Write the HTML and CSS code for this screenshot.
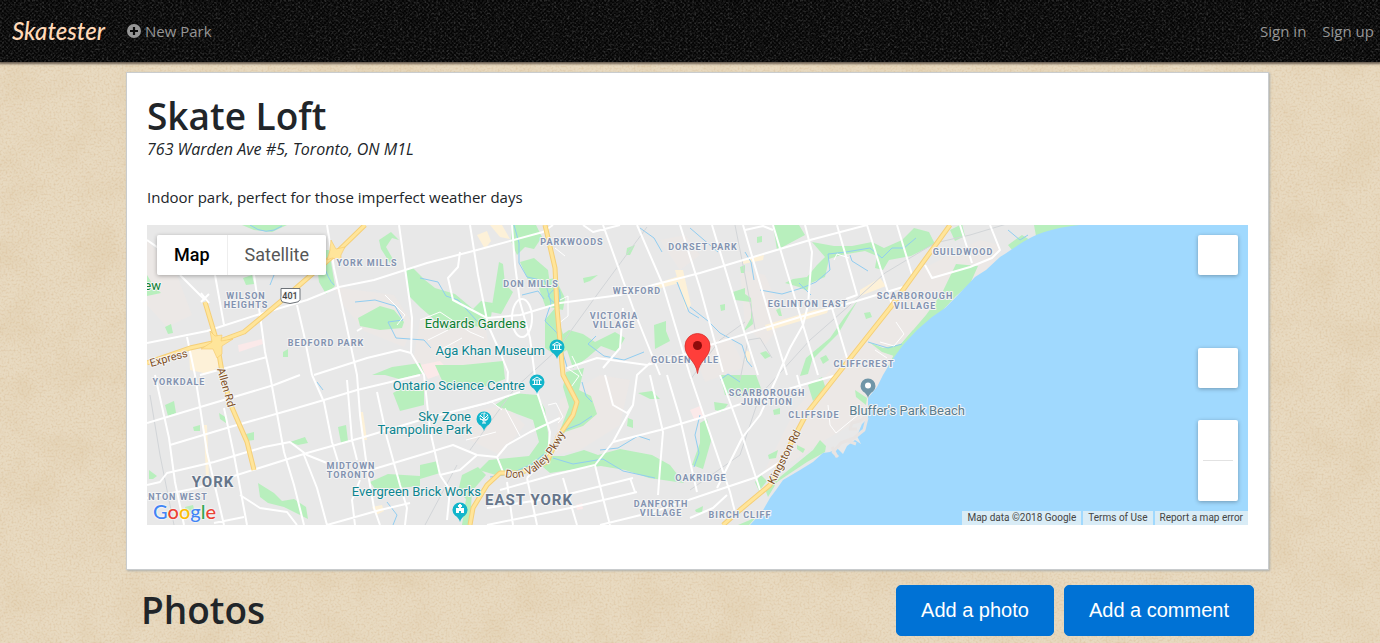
FILE: index.html
```html
<!DOCTYPE html>
<html lang="en">
<head>
<meta charset="utf-8">
<title>Skatester - Skate Loft</title>
<link rel="stylesheet" href="styles.css">
</head>
<body>
<header class="navbar">
  <a class="brand" href="#">Skatester</a>
  <nav class="nav-main">
    <a class="nav-link" href="#"><svg class="nav-icon" viewBox="0 0 14 14" aria-hidden="true"><circle cx="7" cy="7" r="7" fill="#969696"/><path d="M7 3v8M3 7h8" stroke="#0b0b0b" stroke-width="2.2"/></svg>New Park</a>
  </nav>
  <nav class="nav-user">
    <a class="nav-link" href="#">Sign in</a>
    <a class="nav-link" href="#">Sign up</a>
  </nav>
</header>

<main class="page">
  <section class="card">
    <h1 class="title">Skate Loft</h1>
    <address class="address">763 Warden Ave #5, Toronto, ON M1L</address>
    <p class="description">Indoor park, perfect for those imperfect weather days</p>

    <div class="map">
      <svg class="map-canvas" viewBox="147 225 1101 300" preserveAspectRatio="xMidYMid slice" role="img" aria-label="Map of Toronto">
        <rect x="147" y="225" width="1101" height="300" fill="#e8e8e8"/>

        <!-- built-up areas -->
        <g fill="#ece8e6">
          <path d="M147 240l30 35 15 40-25 12-20-22zM334 287l60 8 20 30-10 22-40-16-20-25zM420 320l35-15 30 18 8 50-50 8-30-20zM560 400l40-25 30 5-10 45-40 25-25 5zM455 415l50-10 20 20-25 30-40-20z"/>
          <path d="M740 270l25 5 20 45-20 25-20-20zM880 320l40-50 60-30 20 5-10 30-50 45-40 40-40 60-35 20-30 20-30 10 30-60 40-45zM690 345l40-8 15 30-40 15zM660 240l25-5 15 20-20 15z"/>
        </g>
        <g fill="#fdf1d8">
          <path d="M189 350l29-2 2 18-12 8-18-4zM477 235l10-4 4 10-6 8zM490 225h12l8 14-10-2zM675 270l8 0 8 35-5 5zM655 284l24-8v7l-22 6zM765 325l50-15 14-2-2 5-60 18zM745 350l5 2v10l-5-2zM860 290l20-12 6 8-26 10z"/>
          <path d="M204 425l3 0 2 55-3 0zM360 412l3 0 4 28-3 0zM372 507l10-2 2 6-8 4zM740 260l24-5-1 5-20 4z"/>
        </g>
        <g fill="#fbe9e9"><path d="M238 345l24-6 1 5-24 8zM420 365l20-4 10 10-22 8zM690 410l10-4 5 10-10 5zM576 505l6-2 1 6-6 1z"/></g>

        <!-- parks -->
        <g fill="#b8efbd">
          <path d="M242 225h45l-15 7-18-2zM147 275l6 10 8 8-14 3zM243 278l9-3 2 9-8 1zM322 250l7 0 6 36-9 8-7-12-2-16zM358 318l22-12 14 4 10 12-2 6-22 2-20-4zM379 240l12-8 8 8-7-2-6 9 8 14-4 2-9-14zM165 327l6-3 2 9-5 1zM283 352l5-3v8l-5 0zM405 270l8-2 12 12 10 8 20 6 18 15 8-8 12 2-2 14-12 10-14-3-18 6-12-10-14-12-12-12z"/>
          <path d="M512 225h24l6 12-8 12-9-2-8 8-6-14zM499 262l4 2 2 20 8 8-12 22-10-2zM520 262l14-4 14 12 4 30-6 8-8-22-10-6zM545 280l10-2 10 20-2 12-18-4zM545 320l10-12 8 26 6-4 14 4 12 8 20-10 10 6-8 14-16-6-14 12-14 10-6-18-10 6-12-8zM627 248l8-3-5 10-4 0zM583 278l15-3-8 6-6 2zM654 325l12-4 0 10 4 10-15 8zM372 375l20-8 28-4 4 10-25 6-14-4z"/>
          <path d="M435 365l28 0 40-4 2 18-32 12-28-4zM566 372l18-4-5 22 12 6 6 18-14 12-18 6-15 24 14 0 20-6 14 5 22-6 32 6 18 10 14 18-35-5-24-8-24-4-25 3-26 4-7-6 2-14 14-20 10-26-6-20zM495 405l18-12 24 2 8 14 4 32 0 16-25 14-25 5-20-6 10-10 20-2 20-2 10-14-6-22-16-6z"/>
          <path d="M393 393l14-8 17-2 0 22-24 6zM338 427l8-2 2 16-7 2zM370 482l18-8 32 2v10l-44 4zM258 483l16 10 8 8 12-2 12 8 2 12-8-4-16-8-16-4-8-6zM165 405l9-4 2 12-8 3zM246 434l8-2v8l-7 1zM219 413l8 5-1 5-6-4zM193 427l7-2v6l-6 0zM290 442l15-5 3 6-10 2zM149 470l8 6-4 3-4 0zM185 507l8-2 2 8-8 3zM420 465l18-4 2 12-20 6zM462 475l16-8 8 8-14 16-2 34h-8l4-26-8-8z"/>
          <path d="M773 225h26l6 10-28 15zM812 242l22 4 18 0 20-4 12 6 18-8 12-12 15 4 6 12-24 12-22 4-6 10-8-2 2-12-12-5-24 4-12 4-4 18-14 6-4 8-8-4-14-4 8-4 14-2 10-12 8-8zM733 292l12-4 0 6 6 4 2 26-10 8 8-14 0-16-16-2zM740 267l5-2v8l-4 0zM757 237l5-1 0 6-5 1zM720 305l5-1v6l-4 1zM776 310l4-2 2 8-3 0zM858 300l-14 18-14 20-24 20-6 18 8-2 4-14 26-26zM864 313l6-1 2 5-6 2zM820 358l6-3 3 5-6 4zM760 353l6-2 5 5-6 3zM869 342l14 6 18-4 12-14 5 2-10 18-14 6-12-4z"/>
          <path d="M956 264l22 2-8 18-14 12-28 30-32 40-18 22 18-38 30-35 16-22zM1008 245l14-10 8 5-18 10zM1034 225h48l-46 11zM950 230l12-6 3 12-10 5zM720 375h36l6 16-22 6-15-2zM808 385l14-8 4 12-13 12zM714 402l14 2-6 8-7-2zM692 465l8-22 0-20 7-4 4 22-8 28zM768 455l10-5-2 8-7 1zM797 445l8 4-2 4-6-4zM773 410l7-2v6l-6 1zM813 450l7-10 6 6-1 6-18 10-30 20-9 15-3-8 10-8zM855 390l12 8-1 7-10-8zM628 418l5 2v8l-6-2zM638 393l14-2 8 8-10 0zM695 510l8-4-1 7-6-1zM755 482l6-7 6 6-8 10zM749 525l9-10-8 5-12 5z"/>
        </g>

        <!-- lake -->
        <path fill="#a0d9fe" d="M1248 225H1080C1062 227 1046 230 1032 237 1020 243 1010 251 1000 257L986 270 975 277 957 296 945 308 932 317 917 330 903 345 892 360 883 375 877 387 868 398 868 418 862 424 857 436 861 444 855 440 847 446 843 454 837 448 830 452 823 453 813 462 800 470 783 480 776 490 770 498 762 512 750 525H1248z"/>
        <path fill="none" stroke="#e8e4e2" stroke-width="3" stroke-linejoin="round" d="M867 416l-7 5-8 2-2 6 7 0M867 418l-3 12-10 8-13 5-8 9 5 5M832 447l5 10M848 441l8 3"/>

        <!-- streams -->
        <g fill="none" stroke="#91cdf1" stroke-width="1">
          <path d="M250 225q16 12 32 1M270 285l4-10M322 260q6 20 12 25M355 302l20-2 20 6 8 14-15 2 8 16 28 2 7 8M420 278l18 4 8 14 12 4 18 20 10 10M514 225l5 18 0 20 8 14 18 4 6 22-6 18 12 12 10 34M522 295l16-4 6 8M548 296q12-16 12 0t-12 0M640 228l14 10 8 14M677 282l12 30 10 6M644 352l-20 8-20-4-16-12 8-8"/>
          <path d="M690 228l28 24M745 252l6 10 3 18M760 290l22 4 20-6 14-6 14-12-2-16 18-2 24-4 12 10 10-10 12 0 12-10M850 255l2 6 16 10M690 307l18 14 12 12 22 12 5 16 5 6M868 342l20 6 14-4M799 283l12 12M1008 230l12 10 8-5M560 432l20-8 12-8M600 450l18-2 20-12 12 4M553 458l20 6 30-5 20 12 32 7M582 382l4 14 6 6M490 477l20-3 22-10 12-10M387 502l10 13-4 10M720 380l8-6 12 8M700 415l-5 20 4 18-5 14M317 382l6 8"/>
        </g>

        <!-- railways -->
        <g fill="none" stroke="#d2d5d8">
          <path d="M150 395l10 60 14 70M470 450l45-62 42-38 42-58 48-65M457 465l-32 60M735 225l10 50 10 54M740 380l8-40 12-2 12 20M690 490l50-35 20-60 50-55 40-35 35-32 50-30 35-8 40-12M690 380l30-40 25-18"/>
        </g>

        <!-- minor streets -->
        <g class="streets-minor">
          <path d="M420 320l20-8 30 20 14 6M428 340l20-10M440 350l22-12M880 342l14 4 10-12-8-12M875 350l12 8M828 405l2 20 6 8 12-10 10-8M834 260l3-6 12 4M385 295l20 20-8 10M555 248l10 8M548 405l8-2 7 14-5 6M462 410l30-8 10 8M505 408l15 28M466 440l30-8M560 300l8-4 0 20-10 8M567 368l12 8-10 14M572 356l10 20"/>
        </g>

        <!-- streets -->
        <g class="streets">
          <path d="M327 225L334 268 347 328 357 375 360 415 367 468 374 508 380 525M399 225L405 268 412 318 411 353 424 375 430 430 440 475M147 343L207 331 257 315 307 300 339 287 374 280 427 263 477 250 543 232 553 225M314 375L367 358 400 350 411 353M254 275L260 315 265 352 270 375 284 452 294 485 304 525M297 305L304 335 312 375M200 375L267 357M215 275L224 325M187 337L195 375M180 275L205 300M147 240L190 270"/>
          <path d="M147 423L197 408 274 385 300 375M170 445L230 427 290 410 324 400 357 390 420 375M155 375L169 438 175 482 184 525M195 375L207 452 224 525M224 408L234 455 247 525M147 485L160 482 167 473 214 462 264 447 290 442 307 455 327 463M197 488L237 475 307 453 364 437 427 418 487 403 520 392M304 455L317 488 327 525M312 375L324 402 332 442 340 468M347 380L352 440 357 460M377 392L387 438 400 485 407 508 405 525M327 525L380 510 410 503M364 472L427 453 453 445 477 455 497 457M240 495L260 508 287 512 297 525M147 498L197 488M214 523L244 517M360 480L352 500 355 525M357 331L362 328"/>
          <path d="M470 225L478 275 488 325 500 352 508 372 507 390M512 225L515 265 520 302 530 338 537 392 550 432 548 455 527 478M460 252L458 267 448 278 453 300 487 318 520 315 560 303 620 295 653 285 700 273 750 258 810 240 867 225M603 225L633 308 660 375M637 225L663 285 690 375 730 492 735 512M680 225L700 288 723 372M567 368L597 358 647 365 700 350 710 345 800 317 850 303 903 287M583 225L593 232 620 225M650 363L637 375 633 405 613 442 595 465 553 475 500 490M605 375L613 405 627 413 633 405M497 457L507 445 530 432 560 418M497 457L503 472M595 465L603 498 610 525M613 442L660 430 700 418 767 395 837 375M650 375L663 432 660 468 658 495M667 375L680 418 697 492M487 508L553 498 633 478M563 478L577 525M507 482L513 525M527 478L537 525M487 525L570 508 637 492M600 525L653 512 727 487 757 477 780 462M623 308L620 348 603 368M440 475L460 470 477 455M440 475L450 490 447 520M630 478L635 492"/>
          <ellipse cx="522" cy="318" rx="10" ry="19"/>
          <path d="M712 225L743 328 758 375M743 225L770 318 787 375M773 225L800 315 818 375M805 225L812 252 808 305 803 325 790 348 778 375 760 415 742 438 717 488M837 225L857 295 846 299M867 225L892 305M897 225L913 278M960 225L972 263M925 265L932 278 970 267 992 258 1000 250 990 225M832 308L847 358M720 375L742 435 760 490M797 375L801 390M690 518L713 508 727 495M745 230L763 226 773 230"/>
        </g>

        <!-- highways -->
        <g class="highway-edge">
          <path d="M147 363L190 348 217 342 244 332 280 302 334 255 365 225M205 302L217 342 222 372 230 403 247 442 254 470M545 225L555 268 557 308 560 342 563 375 577 402 573 415 558 437 547 462 520 473 500 473 487 485 473 508 470 525M950 225L890 308 837 375 807 413 790 445 770 485 740 510 723 525"/>
        </g>
        <g class="highway">
          <path d="M147 363L190 348 217 342 244 332 280 302 334 255 365 225M205 302L217 342 222 372 230 403 247 442 254 470M545 225L555 268 557 308 560 342 563 375 577 402 573 415 558 437 547 462 520 473 500 473 487 485 473 508 470 525M950 225L890 308 837 375 807 413 790 445 770 485 740 510 723 525"/>
        </g>
        <path fill="#ffe59a" stroke="#f5c868" stroke-width=".6" d="M210 331l5 5 7-1-1 6 12-2-11 7 0 8-5 4-4-9-12 0 11-7zM331 240l5 9 9-2-4 8 0 5-9-2-5 2 3-10z"/>
        <path fill="none" stroke="#fff" stroke-width="2" d="M201 293l8 10M201 302l8-8"/>

        <path fill="#fff" stroke="#6d7278" d="M281 288.500h19v11q-1 3-5 3l-5 1-5-1q-4 0-4-3z"/>
        <text class="shield" x="290" y="299">401</text>

        <!-- road names -->
        <g class="road-name">
          <text transform="translate(151 367) rotate(-16)">Express</text>
          <text transform="translate(217 369) rotate(74)">Allen Rd</text>
          <text transform="translate(774 485) rotate(-63)">Kingston Rd</text>
          <path id="valley" fill="none" stroke="none" d="M505 477Q540 484 565 434"/>
          <text><textPath href="#valley">Don Valley Pkwy</textPath></text>
        </g>

        <!-- districts -->
        <g class="area">
          <text x="367" y="266">YORK MILLS</text>
          <text x="246" y="299">WILSON</text><text x="246" y="308">HEIGHTS</text>
          <text x="326" y="346">BEDFORD PARK</text><text x="179" y="385">YORKDALE</text>
          <text x="572" y="245">PARKWOODS</text><text x="703" y="250">DORSET PARK</text>
          <text x="531" y="287">DON MILLS</text><text x="637" y="294">WEXFORD</text>
          <text x="614" y="319">VICTORIA</text><text x="614" y="328">VILLAGE</text>
          <text x="685" y="363">GOLDEN MILE</text><text x="808" y="307">EGLINTON EAST</text>
          <text x="963" y="255">GUILDWOOD</text>
          <text x="915" y="299">SCARBOROUGH</text><text x="915" y="309">VILLAGE</text>
          <text x="864" y="367">CLIFFCREST</text>
          <text x="767" y="396">SCARBOROUGH</text><text x="767" y="405">JUNCTION</text>
          <text x="814" y="418">CLIFFSIDE</text>
          <text x="351" y="469">MIDTOWN</text><text x="351" y="478">TORONTO</text>
          <text x="701" y="481">OAKRIDGE</text>
          <text x="661" y="507">DANFORTH</text><text x="661" y="516">VILLAGE</text>
          <text x="740" y="518">BIRCH CLIFF</text><text x="178" y="500">NTON WEST</text>
        </g>
        <g class="city"><text x="213" y="487">YORK</text><text x="529" y="505">EAST YORK</text></g>

        <!-- places -->
        <g class="place place-park"><text x="161" y="290">ew</text><text x="526" y="328">Edwards Gardens</text></g>
        <g class="place place-sight">
          <text x="545" y="355">Aga Khan Museum</text><text x="525" y="390">Ontario Science Centre</text>
          <text x="471" y="421">Sky Zone</text><text x="472" y="434">Trampoline Park</text>
          <text x="481" y="496">Evergreen Brick Works</text>
        </g>
        <g class="place place-beach"><text x="965" y="415">Bluffer's Park Beach</text></g>

        <defs><path id="pin" d="M0 11Q-1 7-5 4.500A7.500 7.500 0 1 1 5 4.500Q1 7 0 11z"/></defs>
        <g fill="#12b5cb">
          <use href="#pin" x="557" y="348"/><use href="#pin" x="537" y="383"/><use href="#pin" x="484" y="420"/><use href="#pin" x="460" y="511"/>
        </g>
        <g fill="none" stroke="#fff">
          <path d="M552.500 345h9l-4.500-3zM554.500 345v4M557 345v4M559.500 345v4M552.500 349.500h9M532.500 380h9l-4.500-3zM534.500 380v4M537 380v4M539.500 380v4M532.500 384.500h9"/>
          <path fill="#fff" stroke="none" d="M456 508h3v-1h-1v-2h1v-1h2v1h1v2h-1v1h3v5h-3v-2h-2v2h-3z"/>
          <path d="M484 413v10M480 415l4 4 4-4M480 419l4 1 4-1M482 423h4"/><circle cx="484" cy="417" r="4" stroke-dasharray="2 1"/>
        </g>
        <use href="#pin" x="868" y="387" fill="#7096a8"/><circle cx="868" cy="385.500" r="3" fill="#fff"/>

        <path fill="#ff3e3a" stroke="#d8302b" stroke-width=".8" d="M697.500 373.500C696 360 685 358 685 346a12.500 12.500 0 1 1 25 0C710 358 699 360 697.500 373.500z"/>
        <circle cx="697.500" cy="345.500" r="4.500" fill="#8e0b0b"/>
      </svg>

      <div class="map-type">
        <button class="type-button type-active" type="button">Map</button>
        <button class="type-button" type="button">Satellite</button>
      </div>
      <div class="map-tools">
        <button class="tool" type="button" aria-label="Toggle fullscreen view"></button>
        <div class="tool-stack">
          <button class="tool" type="button" aria-label="Street View"></button>
          <div class="zoom">
            <button class="zoom-button" type="button" aria-label="Zoom in"></button>
            <button class="zoom-button" type="button" aria-label="Zoom out"></button>
          </div>
        </div>
      </div>
      <a class="map-logo" href="#"><span class="blue">G</span><span class="red">o</span><span class="yellow">o</span><span class="blue">g</span><span class="green">l</span><span class="red">e</span></a>
      <div class="map-legal">
        <span class="legal-item">Map data ©2018 Google</span>
        <a class="legal-item" href="#">Terms of Use</a>
        <a class="legal-item" href="#">Report a map error</a>
      </div>
    </div>
  </section>

  <section class="photos">
    <h2 class="title">Photos</h2>
    <div class="actions">
      <button class="button" type="button">Add a photo</button>
      <button class="button" type="button">Add a comment</button>
    </div>
  </section>
</main>
</body>
</html>
```
FILE: styles.css
```css
* {
  box-sizing: border-box;
}

body {
  margin: 0;
  color: #212529;
  font: 15px/24px "Open Sans", "Noto Sans", sans-serif;
  background-color: #e8dac1;
  background-image: url("data:image/svg+xml,%3Csvg xmlns='http://www.w3.org/2000/svg' width='512' height='512'%3E%3Cfilter id='g' x='0' y='0' width='1' height='1'%3E%3CfeTurbulence type='fractalNoise' baseFrequency='.5' numOctaves='3' seed='4' stitchTiles='stitch'/%3E%3CfeColorMatrix values='0 0 0 0 .65 0 0 0 0 .45 0 0 0 0 .25 0 1 0 0 -.43'/%3E%3C/filter%3E%3Cfilter id='c' x='0' y='0' width='1' height='1'%3E%3CfeTurbulence type='fractalNoise' baseFrequency='.025' numOctaves='5' seed='9' stitchTiles='stitch'/%3E%3CfeColorMatrix values='0 0 0 0 .74 0 0 0 0 .6 0 0 0 0 .4 0 1 0 0 -.43'/%3E%3C/filter%3E%3Crect width='512' height='512' filter='url(%23c)'/%3E%3Crect width='512' height='512' filter='url(%23g)'/%3E%3C/svg%3E");
}

a {
  color: inherit;
  text-decoration: none;
}

button {
  border: 0;
  cursor: pointer;
}

.navbar {
  display: flex;
  align-items: center;
  height: 62px;
  padding: 0 6px 0 12px;
  color: #969696;
  background-color: #0d0d0d;
  background-image:
    url("data:image/svg+xml,%3Csvg xmlns='http://www.w3.org/2000/svg' width='256' height='128'%3E%3Cfilter id='n' x='0' y='0' width='1' height='1'%3E%3CfeTurbulence type='fractalNoise' baseFrequency='.45' numOctaves='2' stitchTiles='stitch'/%3E%3CfeColorMatrix values='0 0 0 0 .2 0 0 0 0 .2 0 0 0 0 .2 0 1 0 0 -.5'/%3E%3C/filter%3E%3Crect width='256' height='128' filter='url(%23n)'/%3E%3C/svg%3E"),
    repeating-conic-gradient(#050505 0 25%, #121212 0 50%);
  background-size: auto, 4px 4px;
  box-shadow: 0 1px 2px 1px #6b5f52;
}

.brand {
  width: 115px;
  color: #ffd9b8;
  font: italic 500 24px/32px Lato, sans-serif;
}

.nav-main {
  flex: 1;
}

.nav-user {
  display: flex;
  gap: 16px;
}

.nav-link {
  display: flex;
  align-items: center;
  gap: 4px;
}

.nav-icon {
  width: 14px;
  height: 14px;
}

.page {
  padding: 10px 111px 7px 126px;
}

.card {
  padding: 24px 20px 44px;
  background: #fff;
  border: 1px solid #c9ccce;
  box-shadow: 1px 1px 2px #aeb0ae;
}

.title {
  margin: 0 0 2px;
  color: #212529;
  font-size: 37px;
  font-weight: 600;
  line-height: 38px;
}

.address {
  font-size: 16px;
  font-style: italic;
}

.description {
  margin: 24px 0 16px;
}

.map {
  position: relative;
  height: 300px;
  overflow: hidden;
  font-family: Roboto, sans-serif;
}

.map-canvas {
  display: block;
  width: 100%;
  height: 100%;
}

.streets,
.streets-minor {
  fill: none;
  stroke: #fff;
  stroke-width: 2;
  stroke-linejoin: round;
}

.streets-minor {
  stroke-width: 1;
}

.highway,
.highway-edge {
  fill: none;
  stroke: #ffe59a;
  stroke-width: 3;
  stroke-linejoin: round;
}

.highway-edge {
  stroke: #f5cf78;
  stroke-width: 5;
}

.map-canvas text {
  paint-order: stroke;
  stroke: #f4f4f4;
  stroke-width: 2px;
  stroke-linejoin: round;
}

.area,
.city {
  fill: #8292b0;
  font-size: 9px;
  font-weight: 700;
  letter-spacing: 1px;
  text-anchor: middle;
}

.city {
  fill: #65758a;
  font-size: 15px;
}

.place {
  font-size: 13px;
  text-anchor: end;
}

.place-park {
  fill: #0b8030;
}

.place-sight {
  fill: #0c8590;
}

.place-beach {
  fill: #587c8e;
}

.road-name {
  fill: #80501f;
  font-size: 11px;
}

.shield {
  fill: #444;
  font-size: 9px;
  font-weight: 500;
  text-anchor: middle;
}

.map-type {
  position: absolute;
  top: 10px;
  left: 10px;
  display: flex;
  overflow: hidden;
  border-radius: 2px;
  box-shadow: 0 1px 4px rgba(0, 0, 0, 0.3);
}

.type-button {
  height: 40px;
  padding: 0 17px 2px;
  color: #565656;
  background: #fff;
  font: 18px Roboto, sans-serif;
}

.type-active {
  color: #000;
  border-right: 1px solid #eee;
  font-weight: 500;
}

.map-tools {
  position: absolute;
  top: 10px;
  right: 10px;
  bottom: 24px;
  display: flex;
  flex-direction: column;
  justify-content: space-between;
}

.tool-stack {
  display: grid;
  gap: 32px;
}

.tool,
.zoom {
  display: block;
  width: 40px;
  height: 40px;
  background: #fff;
  border-radius: 2px;
  box-shadow: 0 1px 4px rgba(0, 0, 0, 0.3);
}

.zoom {
  height: auto;
  padding: 0 5px;
}

.zoom-button {
  display: block;
  width: 30px;
  height: 40px;
  background: #fff;
}

.zoom-button:first-child {
  height: 41px;
  border-bottom: 1px solid #e2e2e2;
}

.map-logo {
  position: absolute;
  bottom: 2px;
  left: 6px;
  font: 500 20px/24px Lato, sans-serif;
  text-shadow: 0 0 2px #fff, 0 0 2px #fff;
}

.blue {
  color: #4285f4;
}

.red {
  color: #ea4335;
}

.yellow {
  color: #fbbc05;
}

.green {
  color: #34a853;
}

.map-legal {
  position: absolute;
  right: 0;
  bottom: 0;
  display: flex;
  gap: 2px;
  color: #444;
  font-size: 10px;
  line-height: 14px;
}

.legal-item {
  padding: 0 5px;
  background: #d9ecf6;
}

.photos {
  display: flex;
  align-items: center;
  justify-content: space-between;
  margin-top: 15px;
  padding: 0 15px;
}

.actions {
  display: flex;
  gap: 10px;
}

.button {
  padding: 12px 24px;
  color: #fff;
  background: #0072d5;
  border: 1px solid #0072d5;
  border-radius: 5px;
  font: 20px/25px "Liberation Sans", Arial, sans-serif;
}
```
